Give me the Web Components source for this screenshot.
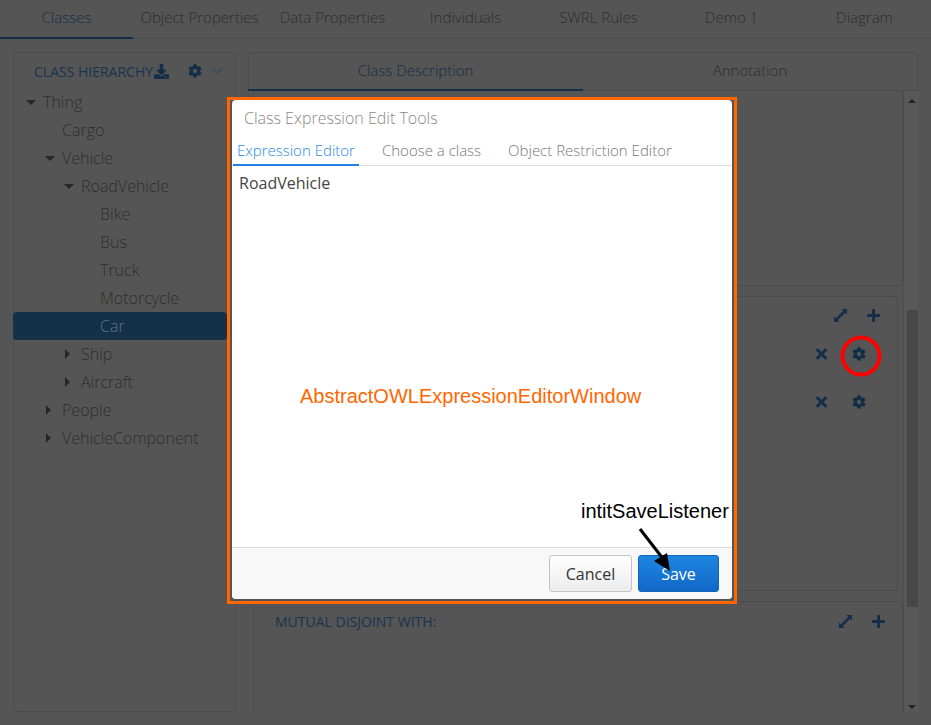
<!DOCTYPE html>
<html>
<head>
<meta charset="utf-8">
<style>
  html, body { margin: 0; height: 100%; overflow: hidden; }
  body {
    background: #555;
    font-family: "Open Sans", sans-serif;
    color: #333;
  }
</style>
</head>
<body>

<owl-app>
  <tab-bar>
    <tab-item active>Classes</tab-item>
    <tab-item>Object Properties</tab-item>
    <tab-item>Data Properties</tab-item>
    <tab-item>Individuals</tab-item>
    <tab-item>SWRL Rules</tab-item>
    <tab-item>Demo 1</tab-item>
    <tab-item>Diagram</tab-item>
  </tab-bar>

  <class-tree slot="left">
    <tree-node level="0" caret="down">Thing</tree-node>
    <tree-node level="1">Cargo</tree-node>
    <tree-node level="1" caret="down">Vehicle</tree-node>
    <tree-node level="2" caret="down">RoadVehicle</tree-node>
    <tree-node level="3">Bike</tree-node>
    <tree-node level="3">Bus</tree-node>
    <tree-node level="3">Truck</tree-node>
    <tree-node level="3">Motorcycle</tree-node>
    <tree-node level="3" selected>Car</tree-node>
    <tree-node level="2" caret="right">Ship</tree-node>
    <tree-node level="2" caret="right">Aircraft</tree-node>
    <tree-node level="1" caret="right">People</tree-node>
    <tree-node level="1" caret="right">VehicleComponent</tree-node>
  </class-tree>

  <class-detail slot="right">
    <card-box style="height:195px"></card-box>
    <card-box inset style="height:295px">
      <icon-row head><fa-icon name="expand"></fa-icon><fa-icon name="plus"></fa-icon></icon-row>
      <icon-row><fa-icon name="times"></fa-icon><fa-icon name="cog"></fa-icon></icon-row>
      <icon-row><fa-icon name="times"></fa-icon><fa-icon name="cog"></fa-icon></icon-row>
    </card-box>
    <card-box title="Mutual disjoint with:" style="flex:1">
      <icon-row head wide><fa-icon name="expand"></fa-icon><fa-icon name="plus"></fa-icon></icon-row>
    </card-box>
  </class-detail>
</owl-app>

<expression-modal>
  <modal-tab active>Expression Editor</modal-tab>
  <modal-tab>Choose a class</modal-tab>
  <modal-tab>Object Restriction Editor</modal-tab>
</expression-modal>

<note-layer></note-layer>

<script>
  const ICONS = {
    cog: ["0 0 512 512", "M487.4 315.7l-42.6-24.6c4.3-23.2 4.3-47 0-70.2l42.6-24.6c4.9-2.8 7.1-8.6 5.5-14-11.1-35.6-30-67.8-54.7-94.6-3.8-4.1-10-5.1-14.8-2.3L380.8 110c-17.9-15.4-38.5-27.3-60.8-35.1V25.8c0-5.6-3.9-10.5-9.4-11.7-36.7-8.2-74.3-7.8-109.2 0-5.5 1.2-9.4 6.1-9.4 11.7V75c-22.2 7.9-42.8 19.8-60.8 35.1L88.7 85.5c-4.9-2.8-11-1.9-14.8 2.3-24.7 26.7-43.6 58.9-54.7 94.6-1.7 5.4.6 11.2 5.5 14L67.3 221c-4.3 23.2-4.3 47 0 70.2l-42.6 24.6c-4.9 2.8-7.1 8.6-5.5 14 11.1 35.6 30 67.8 54.7 94.6 3.8 4.1 10 5.1 14.8 2.3l42.6-24.6c17.9 15.4 38.5 27.3 60.8 35.1v49.2c0 5.6 3.9 10.5 9.4 11.7 36.7 8.2 74.3 7.8 109.2 0 5.5-1.2 9.4-6.1 9.4-11.7v-49.2c22.2-7.9 42.8-19.8 60.8-35.1l42.6 24.6c4.9 2.8 11 1.9 14.8-2.3 24.7-26.7 43.6-58.9 54.7-94.6 1.5-5.5-.7-11.3-5.6-14.1zM256 336c-44.1 0-80-35.9-80-80s35.9-80 80-80 80 35.9 80 80-35.9 80-80 80z"],
    times: ["0 0 352 512", "M242.72 256l100.07-100.07c12.28-12.28 12.28-32.19 0-44.48l-22.24-22.24c-12.28-12.28-32.19-12.28-44.48 0L176 189.28 75.93 89.21c-12.28-12.28-32.19-12.28-44.48 0L9.21 111.45c-12.28 12.28-12.28 32.19 0 44.48L109.28 256 9.21 356.07c-12.28 12.28-12.28 32.19 0 44.48l22.24 22.24c12.28 12.28 32.2 12.28 44.48 0L176 322.72l100.07 100.07c12.28 12.28 32.2 12.28 44.48 0l22.24-22.24c12.28-12.28 12.28-32.19 0-44.48L242.72 256z"],
    plus: ["0 0 448 512", "M416 208H272V64c0-17.67-14.33-32-32-32h-32c-17.67 0-32 14.33-32 32v144H32c-17.67 0-32 14.33-32 32v32c0 17.67 14.33 32 32 32h144v144c0 17.67 14.33 32 32 32h32c17.67 0 32-14.33 32-32V304h144c17.67 0 32-14.33 32-32v-32c0-17.67-14.33-32-32-32z"],
    download: ["0 0 512 512", "M216 0h80c13.3 0 24 10.7 24 24v168h87.7c17.8 0 26.7 21.5 14.1 34.1L269.7 378.3c-7.5 7.5-19.8 7.5-27.3 0L90.1 226.1c-12.6-12.6-3.7-34.1 14.1-34.1H192V24c0-13.3 10.7-24 24-24zm296 376v112c0 13.3-10.7 24-24 24H24c-13.3 0-24-10.7-24-24V376c0-13.3 10.7-24 24-24h146.7l49 49c20.1 20.1 52.5 20.1 72.6 0l49-49H488c13.3 0 24 10.7 24 24zm-124 88c0-11-9-20-20-20s-20 9-20 20 9 20 20 20 20-9 20-20zm64 0c0-11-9-20-20-20s-20 9-20 20 9 20 20 20 20-9 20-20z"],
    expand: ["0 0 16 16", "M9 1H15v6l-2-2L5 13l2 2H1V9l2 2L11 3z"],
    chevron: ["0 0 448 512", "M207 381L13 187c-9-9-9-25 0-34l23-23c9-9 25-9 34 0l154 153 154-153c9-9 25-9 34 0l23 23c9 9 9 25 0 34L241 381c-9 9-25 9-34 0z"]
  };

  customElements.define("fa-icon", class extends HTMLElement {
    connectedCallback() {
      const name = this.getAttribute("name");
      const [box, d] = ICONS[name];
      const size = { cog: 14, times: 16, expand: 15 }[name] || 15;
      this.attachShadow({ mode: "open" }).innerHTML = `
        <style>
          :host { display: inline-flex; align-items: center; justify-content: center; color: #142d48; }
          svg { display: block; height: var(--icon-size, ${size}px); width: auto; fill: currentColor; }
        </style>
        <svg viewBox="${box}"><path d="${d}"/></svg>`;
    }
  });

  customElements.define("owl-app", class extends HTMLElement {
    constructor() {
      super();
      this.attachShadow({ mode: "open" }).innerHTML = `
        <style>
          :host { display: flex; flex-direction: column; height: 725px; box-sizing: border-box; }
          .main { flex: 1; min-height: 0; display: flex; gap: 12px; padding: 13px 13px 13px 13px; }
        </style>
        <slot></slot>
        <div class="main">
          <slot name="left"></slot>
          <slot name="right"></slot>
        </div>`;
    }
  });

  customElements.define("tab-bar", class extends HTMLElement {
    constructor() {
      super();
      this.attachShadow({ mode: "open" }).innerHTML = `
        <style>
          :host { display: grid; grid-template-columns: repeat(7, 1fr); height: 39px; box-sizing: border-box; border-bottom: 1px solid #4c4c4c; }
        </style>
        <slot></slot>`;
    }
  });

  customElements.define("tab-item", class extends HTMLElement {
    constructor() {
      super();
      this.attachShadow({ mode: "open" }).innerHTML = `
        <style>
          :host { display: flex; justify-content: center; padding-top: 7px; height: 39px; box-sizing: border-box; font-size: 15px; font-weight: 300; line-height: 20px; color: #2e2e2e; }
          :host([active]) { color: #142d48; border-bottom: 2px solid #142d48; }
        </style>
        <slot></slot>`;
    }
  });

  customElements.define("class-tree", class extends HTMLElement {
    constructor() {
      super();
      this.attachShadow({ mode: "open" }).innerHTML = `
        <style>
          :host { display: block; width: 223px; box-sizing: border-box; border: 1px solid #4b4b4b; border-radius: 4px; }
          header { display: flex; align-items: center; height: 36px; padding-left: 20px; font-size: 14px; color: #1a3350; white-space: nowrap; }
          .dl { margin-left: 1px; }
          .cog { margin-left: 19px; }
          .chev { margin-left: 10px; --icon-size: 12px; color: #3e4c5c; }
          .rows { margin-top: -1px; }
        </style>
        <header>
          <span>CLASS HIERARCHY</span>
          <fa-icon class="dl" name="download"></fa-icon>
          <fa-icon class="cog" name="cog"></fa-icon>
          <fa-icon class="chev" name="chevron"></fa-icon>
        </header>
        <div class="rows"><slot></slot></div>`;
    }
  });

  customElements.define("tree-node", class extends HTMLElement {
    connectedCallback() {
      const level = Number(this.getAttribute("level") || 0);
      const caret = this.getAttribute("caret");
      this.attachShadow({ mode: "open" }).innerHTML = `
        <style>
          :host { display: flex; align-items: center; height: 28px; padding-left: ${11 + level * 19}px; font-size: 16px; font-weight: 300; color: #2e2e2e; margin-left: -1px; width: 214px; box-sizing: border-box; white-space: nowrap; }
          :host([selected]) { background: #153049; border-radius: 4px; color: #5d7288; }
          .caret { width: 19px; flex: none; display: flex; align-items: center; }
          .down { width: 0; height: 0; margin-left: 2px; border: 5px solid transparent; border-bottom: 0; border-top: 5px solid #262626; }
          .right { width: 0; height: 0; margin-left: 3px; border: 5px solid transparent; border-right: 0; border-left: 5px solid #262626; }
        </style>
        <span class="caret">${caret ? `<span class="${caret}"></span>` : ""}</span>
        <slot></slot>`;
    }
  });

  customElements.define("class-detail", class extends HTMLElement {
    constructor() {
      super();
      this.attachShadow({ mode: "open" }).innerHTML = `
        <style>
          :host { flex: 1; min-width: 0; display: flex; flex-direction: column; }
          .head { display: grid; grid-template-columns: 1fr 1fr; height: 39px; box-sizing: border-box; border: 1px solid #4b4b4b; border-radius: 4px 4px 0 0; font-size: 15px; font-weight: 300; }
          .head div { display: flex; justify-content: center; padding-top: 7px; line-height: 20px; color: #2e2e2e; }
          .head .on { color: #142d48; border-bottom: 2px solid #142d48; margin: 0 0 -1px -1px; }
          .body { flex: 1; min-height: 0; display: flex; margin-left: 5px; }
          .cards { flex: 1; min-width: 0; border-left: 1px solid #4b4b4b; display: flex; flex-direction: column; }
          .bar { width: 15px; flex: none; display: flex; flex-direction: column; align-items: center; background: #585858; box-sizing: border-box; border-left: 1px solid #4e4e4e; }
          .bar span { flex: none; }
          .up, .dn { width: 0; height: 0; border: 4px solid transparent; margin-left: 2px; }
          .up { border-top: 0; border-bottom: 4px solid #222; margin-top: 8px; }
          .dn { border-bottom: 0; border-top: 4px solid #222; margin-top: 98px; }
          .thumb { width: 11px; height: 297px; margin: 207px 0 0 2px; background: #474747; }
        </style>
        <div class="head"><div class="on">Class Description</div><div>Annotation</div></div>
        <div class="body">
          <div class="cards"><slot></slot></div>
          <div class="bar"><span class="up"></span><span class="thumb"></span><span class="dn"></span></div>
        </div>`;
    }
  });

  customElements.define("card-box", class extends HTMLElement {
    connectedCallback() {
      const title = this.getAttribute("title");
      this.removeAttribute("title");
      this.attachShadow({ mode: "open" }).innerHTML = `
        <style>
          :host { display: block; position: relative; box-sizing: border-box; border-right: 1px solid #4b4b4b; border-bottom: 1px solid #4b4b4b; border-radius: 0 0 4px 0; margin-bottom: 10px; }
          :host([inset]) { border-top: 1px solid #4b4b4b; border-radius: 4px; margin-right: 5px; }
          :host(:last-child) { border-bottom: 0; border-top: 1px solid #4b4b4b; border-radius: 0 4px 0 0; margin-bottom: 0; }
          .title { position: absolute; left: 21px; top: 11px; font-size: 14px; line-height: 18px; color: #1a3350; text-transform: uppercase; }
        </style>
        ${title ? `<div class="title">${title}</div>` : ""}
        <slot></slot>`;
    }
  });

  customElements.define("icon-row", class extends HTMLElement {
    constructor() {
      super();
      this.attachShadow({ mode: "open" }).innerHTML = `
        <style>
          :host { display: flex; justify-content: flex-end; align-items: center; gap: 25px; height: 48px; padding-right: 31px; }
          :host([head]) { height: 36px; gap: 19px; padding-right: 17px; margin-bottom: -3px; }
          :host([wide]) { height: 38px; gap: 19px; margin-bottom: 0; }
        </style>
        <slot></slot>`;
    }
  });

  customElements.define("expression-modal", class extends HTMLElement {
    constructor() {
      super();
      this.attachShadow({ mode: "open" }).innerHTML = `
        <style>
          :host { position: absolute; left: 227px; top: 97px; width: 510px; height: 507px; box-sizing: border-box; border: 3px solid #ff6600; padding: 0 2px 2px; }
          .win { height: 100%; background: #fff; border-radius: 4px; display: flex; flex-direction: column; }
          h1 { margin: 0; font-weight: 300; font-size: 16px; line-height: 22px; color: #888; padding: 7px 12px 0; height: 38px; box-sizing: border-box; flex: none; }
          nav { display: flex; gap: 19px; height: 28px; border-bottom: 1px solid #ddd; box-sizing: border-box; flex: none; padding-left: 1px; }
          .text { flex: 1; padding: 6px 7px; font-size: 16px; line-height: 22px; color: #444; }
          footer { height: 52px; box-sizing: border-box; background: #f8f8f8; border-top: 1px solid #ddd; border-radius: 0 0 4px 4px; display: flex; justify-content: flex-end; align-items: flex-start; gap: 6px; padding: 7px 13px 0 0; }
          button { width: 83px; height: 37px; box-sizing: border-box; border-radius: 3px; font: 16px "Open Sans", sans-serif; padding: 0; }
          .cancel { background: linear-gradient(#fff, #ececec); border: 1px solid #c4c4c4; color: #333; }
          .save { width: 81px; background: linear-gradient(#1d86e0, #1267c8); border: 1px solid #1264b8; color: #fff; }
        </style>
        <div class="win">
          <h1>Class Expression Edit Tools</h1>
          <nav><slot></slot></nav>
          <div class="text">RoadVehicle</div>
          <footer>
            <button class="cancel">Cancel</button>
            <button class="save">Save</button>
          </footer>
        </div>`;
    }
  });

  customElements.define("modal-tab", class extends HTMLElement {
    constructor() {
      super();
      this.attachShadow({ mode: "open" }).innerHTML = `
        <style>
          :host { display: block; padding: 0 4px; height: 27px; box-sizing: border-box; font-size: 15px; font-weight: 300; line-height: 24px; color: #777; }
          :host([active]) { color: #2a8ae6; border-bottom: 2px solid #1e82e2; height: 28px; }
        </style>
        <slot></slot>`;
    }
  });

  customElements.define("note-layer", class extends HTMLElement {
    constructor() {
      super();
      this.attachShadow({ mode: "open" }).innerHTML = `
        <style>
          :host { position: absolute; inset: 0; pointer-events: none; font-family: "Liberation Sans", Arial, sans-serif; font-size: 20px; line-height: 24px; }
          span { position: absolute; white-space: nowrap; }
          .window { left: 300px; top: 384px; color: #ff6600; }
          .listener { left: 581px; top: 499px; color: #000; }
          svg { position: absolute; left: 0; top: 0; }
        </style>
        <span class="window">AbstractOWLExpressionEditorWindow</span>
        <span class="listener">intitSaveListener</span>
        <svg width="931" height="725">
          <circle cx="861" cy="356" r="18.5" fill="none" stroke="#f00" stroke-width="4"/>
          <path d="M640 529L664 560" stroke="#000" stroke-width="3" fill="none"/>
          <path d="M654 561L667 553L670 571Z" fill="#000"/>
        </svg>`;
    }
  });
</script>
</body>
</html>
